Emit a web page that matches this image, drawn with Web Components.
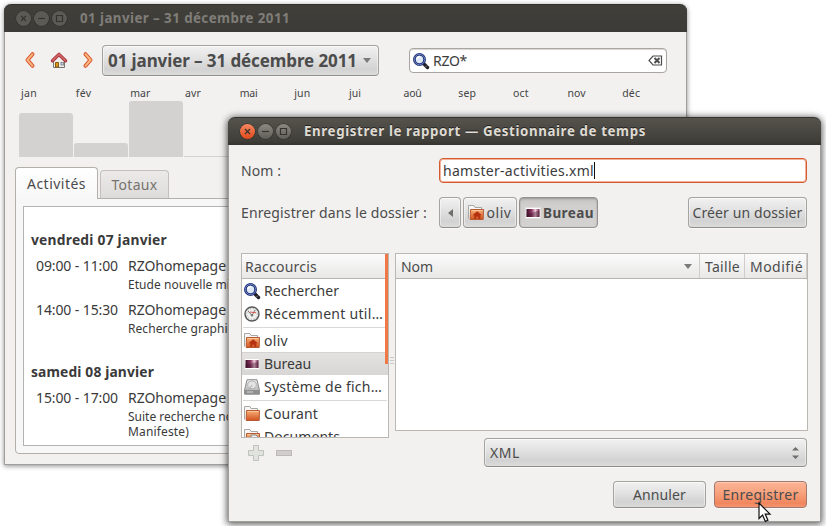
<!DOCTYPE html>
<html lang="fr">
<head>
<meta charset="utf-8">
<title>Gestionnaire de temps</title>
<style>
html,body{margin:0;width:826px;height:526px;overflow:hidden;background:#fff;
 font-family:"Noto Sans","Open Sans",sans-serif;font-size:14px;color:#4c4c4c}
time-desktop{display:block}
</style>
</head>
<body>
<time-desktop></time-desktop>
<script>
const define = (name, html, setup) => customElements.define(name, class extends HTMLElement {
  connectedCallback() {
    if (this.shadowRoot) return;
    const root = this.attachShadow({mode: 'open'});
    const t = document.createElement('template');
    t.innerHTML = typeof html === 'function' ? html(this) : html;
    root.append(t.content.cloneNode(true));
    if (setup) setup(this, root);
  }
});

const folder = inner => `<path d="M.5 13.500V.5h5.500l1 2h6.500v4" fill="#f7f6f5" stroke="#a9a7a4"/><path d="M2.500 4.500h13l-.3 10H2.200z" fill="url(#of)" stroke="#b65a32"/><path d="M3.500 5.500h11" stroke="#f9c39c"/>${inner}`;
const ofGrad = `<defs><linearGradient id="of" x1="0" y1="0" x2="0" y2="1"><stop offset="0" stop-color="#f8b078"/><stop offset="1" stop-color="#d2521f"/></linearGradient>
<linearGradient id="dk" x1="0" y1="0" x2="1" y2="0"><stop offset="0" stop-color="#3d0f26"/><stop offset=".4" stop-color="#8c3a64"/><stop offset=".68" stop-color="#f3cfe0"/><stop offset="1" stop-color="#6a2448"/></linearGradient>
<linearGradient id="gr" x1="0" y1="0" x2="0" y2="1"><stop offset="0" stop-color="#eee"/><stop offset="1" stop-color="#a5a5a5"/></linearGradient></defs>`;
const ICONS = {
  left: [10,16,`<path d="M7.500 2.200L2.500 8l5 5.800" fill="none" stroke="#d8532a" stroke-width="4" stroke-linecap="round" stroke-linejoin="round"/><path d="M7.500 2.200L2.500 8l5 5.800" fill="none" stroke="#f9b680" stroke-width="2" stroke-linecap="round"/>`],
  right: [10,16,`<path d="M2.500 2.200l5 5.800-5 5.800" fill="none" stroke="#d8532a" stroke-width="4" stroke-linecap="round" stroke-linejoin="round"/><path d="M2.500 2.200l5 5.800-5 5.800" fill="none" stroke="#f9b680" stroke-width="2" stroke-linecap="round"/>`],
  home: [16,16,`<path d="M2.500 8.500L8 3.500l5.500 5v7h-11z" fill="#efeeec" stroke="#77746f"/><path d="M4.500 15v-4.500h3V15z" fill="#d99a1c" stroke="#8a5a0c"/><rect x="10" y="10.500" width="2.500" height="2.500" fill="#c9d8e8" stroke="#777" stroke-width=".8"/><path d="M1.500 8.800L8 2.400l6.500 6.400" fill="none" stroke="#a3333a" stroke-width="3.400" stroke-linecap="round" stroke-linejoin="round"/><path d="M1.700 8.500L8 2.300l6.300 6.200" fill="none" stroke="#cf5f63" stroke-width="1.800" stroke-linecap="round"/>`],
  search: [16,16,`<path d="M10.500 10.500l4 4" stroke="#1f1f27" stroke-width="3.400" stroke-linecap="round"/><path d="M12.500 14l1.500-1.500" stroke="#8c8c90" stroke-width="1"/><circle cx="6.500" cy="6.500" r="5.100" fill="#dde8f4" stroke="#26357a" stroke-width="2.800"/><circle cx="6.500" cy="6.500" r="5.200" fill="none" stroke="#6c86c4" stroke-width=".9"/><path d="M4 6a3 3 0 013-2.500" fill="none" stroke="#fff" stroke-width="1.400"/>`],
  clear: [15,11,`<path d="M5 1h8.500v9H5L1 5.500z" fill="#fff" stroke="#4d4d4d" stroke-width="1.200"/><path d="M6.500 3l5 5m0-5l-5 5" stroke="#4d4d4d" stroke-width="2"/>`],
  clock: [16,16,`<circle cx="8" cy="8" r="7" fill="#f0f0ef" stroke="#555" stroke-width="1.400"/><circle cx="8" cy="8" r="5.300" fill="none" stroke="#999" stroke-dasharray="1 1.800"/><path d="M4 5l4 4.500L11 4" fill="none" stroke="#666" stroke-width=".9"/><path d="M6 6l6 .8" stroke="#d5443c" stroke-width=".9"/><circle cx="8" cy="9.300" r="1.200" fill="#777"/>`],
  userhome: [16,16,folder(`<path d="M4.500 10.300l4.700-4 4.700 4h-1.500V14h-2v-2.300H8.200V14h-2v-3.700z" fill="#b5310f"/>`)],
  folder: [16,16,folder('')],
  docs: [16,16,folder(`<path d="M7 6h5l2 2v7H7z" fill="#eee" stroke="#888"/><path d="M9 10h3M9 12h3" stroke="#777"/>`)],
  desktop: [16,16,`<rect x=".5" y="2.500" width="15" height="11" fill="#fff" stroke="#e2dfdd"/><rect x="1.500" y="4" width="13" height="8" fill="url(#dk)"/><path d="M1.500 8.500q6-.5 13-3V12h-13z" fill="#3d0f26" opacity=".4"/>`],
  disk: [16,16,`<path d="M3 .7h10l2.400 10.300v4.200H.6V11z" fill="url(#gr)" stroke="#8a8a8a"/><ellipse cx="8" cy="5.800" rx="4.300" ry="3.800" fill="#e4e4e4" stroke="#b5b5b5"/><path d="M8 6l-3 4" stroke="#aaa"/><path d="M1 11h14v4H1z" fill="#8f8f8f"/><path d="M3 13h6" stroke="#d5d5d5"/>`],
  plus: [16,16,`<path d="M5.500.5h5v5h5v5h-5v5h-5v-5h-5v-5h5z" fill="#e1e3df" stroke="#c0c3bd"/>`],
  minus: [16,6,`<rect x=".5" y=".5" width="15" height="5" fill="#d0cdcd" stroke="#bdb9b9"/>`],
  down: [8,5,`<path d="M0 0h8L4 5z" fill="#7c7b79"/>`],
  back: [5,8,`<path d="M5 0v8L0 4z" fill="#6f6e6c"/>`],
  updown: [7,12,`<path d="M0 3.500h7L3.500 0zM0 8.500h7L3.500 12z" fill="#6f6e6c"/>`],
  grip: [4,8,`<path d="M0 .5h4M0 3.500h4M0 6.500h4" stroke="#c9c7c5"/>`],
  pointer: [13,21,`<path d="M1 1v15.500l3.600-3.400 2.700 6.300 2.600-1.100-2.700-6.200H12z" fill="#fff" stroke="#111" stroke-width="1.200"/>`]
};
define('ui-icon', el => {
  const [w,h,body] = ICONS[el.getAttribute('name')];
  return `<style>:host{display:block;flex:none;width:${w}px;height:${h}px}svg{display:block;overflow:visible}</style><svg width="${w}" height="${h}" viewBox="0 0 ${w} ${h}">${ofGrad}${body}</svg>`;
});

define('gtk-button', `<style>
:host{display:flex;box-sizing:border-box;height:31px;align-items:center;justify-content:center;gap:5px;flex:none;
 border:1px solid #a5a3a0;border-bottom-color:#8f8d8a;border-radius:4px;background:linear-gradient(#f1f1f1,#e3e3e3 40%,#d2d2d2 80%,#dcdcdc);
 box-shadow:inset 0 1px #fafafa,inset 1px 0 #ffffff70,inset -1px 0 #ffffff70,0 1px #ffffff90}
:host([pressed]){background:linear-gradient(#c4c3c2,#d0cfce 25%,#d3d2d1);border-color:#949290;box-shadow:inset 0 1px 2px #9a9896,0 1px #ffffff90}
:host([primary]){background:linear-gradient(#fbb495,#f8a481 40%,#f0865d 85%,#f29673);border-color:#a3786a;box-shadow:inset 0 1px #fdc9b2,0 1px #ffffff90}
</style><slot></slot>`);

define('gtk-entry', `<style>
:host{display:flex;box-sizing:border-box;height:25px;align-items:center;background:#fff;border:1px solid #a9a5a0;border-radius:4px;color:#3c3c3c;padding:0 3px;
 box-shadow:inset 0 1px 1px #d9d7d4}
:host([focused]){border-color:#d3592f;box-shadow:inset 0 0 0 1px #f2b29b}
</style><slot></slot>`);

define('os-window', `<style>
:host{display:flex;flex-direction:column;position:absolute;box-sizing:border-box;background:#f2f1f0;border:1px solid #a09e9b;border-top:0;border-radius:7px 7px 0 0;box-shadow:0 1px 5px #0007}
:host([active]){box-shadow:0 1px 7px 1px #000a}
header{height:28px;box-sizing:border-box;margin:0 -1px;flex:none;display:flex;align-items:center;padding-left:12px;gap:3px;border-radius:7px 7px 0 0;
 background:linear-gradient(#403f3a,#3c3b37);border-top:1px solid #34332f;color:#807d78;font-weight:700;font-size:13.300px}
:host([active]) header{background:linear-gradient(#55534c,#3f3e39 85%,#34332e);color:#dfdbd2;text-shadow:0 -1px #222}
i{width:15px;height:15px;flex:none;border-radius:50%;background:#5c5a55;display:flex;box-shadow:0 0 0 .5px #2f2e2b}
:host([active]) i{background:linear-gradient(#8b8982,#605e58)}
:host([active]) i:first-child{background:linear-gradient(#f6875f,#e0491b)}
svg{width:15px;height:15px;stroke:#34332f;fill:none;stroke-width:1.200}
span{margin:0 0 2px 10px}
main{flex:1;min-height:0;display:flex;flex-direction:column}
</style><header><i><svg><path d="M5 5l5 5m0-5l-5 5"/></svg></i><i><svg><path d="M4 7.500h7"/></svg></i><i><svg><path d="M4.500 4.500h6v6h-6z"/></svg></i><span><slot name="title"></slot></span></header><main><slot></slot></main>`);

define('month-chart', () => {
  const m = [['jan',16,44],['fév',16,14],['mar',20,56],['avr',16,1],['mai',18,1],['jun',16,1],['jui',12,1],['aoû',18,1],['sep',18,1],['oct',16,1],['nov',18,1],['déc',18,1]];
  return `<style>:host{display:block;margin:10px 0 0 14px;font-size:10.500px;color:#444}
  .l{display:grid;grid-template-columns:repeat(12,54.670px);height:15px;margin-bottom:-1px}
  fit-text{line-height:15px;padding-left:2px}
  .g{display:flex;align-items:flex-end;gap:1px;height:57px}
  .b{width:54px;background:#d3d2d1;border-radius:3px 3px 0 0}</style><div class="l">` +
  m.map(a => `<fit-text w="${a[1]}">${a[0]}</fit-text>`).join('') + '</div><div class="g">' + m.map(a => `<div class="b" style="height:${a[2]}px${a[2]<2?';border-radius:0':''}"></div>`).join('') + '</div>';
});

define('report-entry', el => `<style>
:host{display:grid;grid-template-columns:92px 1fr;padding-left:5px;line-height:18px}
.n{font-size:12px;line-height:15px;grid-column:2;display:flex;flex-direction:column;margin-top:2px}
</style><fit-text w="82">${el.getAttribute('time')}</fit-text><fit-text w="98">RZOhomepage</fit-text><div class="n"><slot></slot></div>`);

define('tab-view', `<style>
:host{display:block;margin:10px 10px 0}
nav{display:flex;align-items:flex-end;gap:2px;height:31px}
nav div{box-sizing:border-box;display:flex;align-items:center;justify-content:center;border:1px solid #c3c0bc;border-bottom:0;border-radius:4px 4px 0 0}
.on{width:83px;height:32px;margin-bottom:-1px;background:linear-gradient(#fff,#f7f7f7);border-color:#b3afa9!important;position:relative}
.off{width:69px;height:28px;background:linear-gradient(#ebeae9,#dddcdb);color:#77736d}
.page{height:256px;box-sizing:border-box;border:1px solid #b3afa9;border-radius:0 4px 4px 4px;background:#f7f7f7;padding:7px}
.view{height:240px;box-sizing:border-box;border:1px solid #b5b3b0;background:#fff;padding:24px 0 0 7px;color:#3a3a3a;overflow:hidden;white-space:nowrap}
h3{margin:0 0 8px;font-size:13.800px;line-height:18px;font-weight:700;height:18px}
</style><nav><div class="on"><fit-text w="59">Activités</fit-text></div><div class="off"><fit-text w="46">Totaux</fit-text></div></nav>
<div class="page"><div class="view">
<h3><fit-text w="136">vendredi 07 janvier</fit-text></h3>
<report-entry time="09:00 - 11:00" style="margin-bottom:9px"><fit-text w="102">Etude nouvelle mi</fit-text></report-entry>
<report-entry time="14:00 - 15:30" style="margin-bottom:27px"><fit-text w="107">Recherche graphiq</fit-text></report-entry>
<h3><fit-text w="123">samedi 08 janvier</fit-text></h3>
<report-entry time="15:00 - 17:00"><fit-text w="105">Suite recherche no</fit-text><fit-text w="61">Manifeste)</fit-text></report-entry>
</div></div>`);

define('place-item', el => `<style>
:host{display:flex;height:23px;align-items:center;gap:4px;padding-left:2px;box-sizing:border-box;color:#3a3a3a;white-space:nowrap}
:host([selected]){background:linear-gradient(#e5e3e1,#d8d6d4);box-shadow:inset 0 1px #d5d3d0}
</style><ui-icon name="${el.getAttribute('icon')}"></ui-icon><slot></slot>`);

define('place-list', `<style>
:host{display:block;box-sizing:border-box;width:148px;height:185px;border:1px solid #bbb8b4;background:#fff;overflow:hidden;position:relative}
.h{height:25px;box-sizing:border-box;border-bottom:1px solid #b8b5b1;background:linear-gradient(#fbfbfb,#e9e8e7);display:flex;align-items:center;padding-left:3px}
hr{border:0;height:1px;background:#dad8d5;margin:2px 1px 1px}
.bar{position:absolute;right:0;top:0;width:3px;height:110px;background:#f07746}
</style><div class="h"><fit-text w="72">Raccourcis</fit-text></div>
<place-item icon="search"><fit-text w="75">Rechercher</fit-text></place-item>
<place-item icon="clock"><fit-text w="119">Récemment util…</fit-text></place-item><hr>
<place-item icon="userhome"><fit-text w="24">oliv</fit-text></place-item>
<place-item icon="desktop" selected><fit-text w="47">Bureau</fit-text></place-item>
<place-item icon="disk"><fit-text w="118">Système de fich…</fit-text></place-item><hr>
<place-item icon="folder"><fit-text w="54">Courant</fit-text></place-item>
<place-item icon="docs"><fit-text w="76">Documents</fit-text></place-item><div class="bar"></div>`);

define('file-table', `<style>
:host{display:block;flex:none;box-sizing:border-box;width:413px;height:178px;border:1px solid #bbb8b4;background:#fff}
.h{height:25px;box-sizing:border-box;border-bottom:1px solid #b8b5b1;background:linear-gradient(#fbfbfb,#e9e8e7);display:grid;grid-template-columns:304px 45px 1fr}
.h div{display:flex;align-items:center;justify-content:space-between;padding:0 7px 0 5px;border-right:1px solid #cfccc9}
.h div:last-child{padding-right:0}
</style><div class="h"><div><fit-text w="32">Nom</fit-text><ui-icon name="down"></ui-icon></div><div><fit-text w="35">Taille</fit-text></div><div><fit-text w="53">Modifié</fit-text></div></div>`);

define('report-window', `<style>
:host{display:block}
.bar{display:flex;align-items:center;height:31px;margin-top:13px;padding-left:20px}
.bar>ui-icon{margin-bottom:2px}
</style><div class="bar"><ui-icon name="left"></ui-icon><ui-icon name="home" style="margin:0 16px 2px"></ui-icon><ui-icon name="right"></ui-icon>
<gtk-button style="width:277px;margin-left:9px;font-size:17px;font-weight:700;gap:6px;padding-right:2px"><fit-text w="249">01 janvier – 31 décembre 2011</fit-text><ui-icon name="down"></ui-icon></gtk-button>
<gtk-entry style="width:258px;margin-left:30px;gap:4px"><ui-icon name="search"></ui-icon><fit-text w="34">RZO*</fit-text><ui-icon name="clear" style="margin-left:auto"></ui-icon></gtk-entry></div>
<month-chart></month-chart><tab-view></tab-view>`);

define('save-dialog', `<style>
:host{display:block;padding:13px 13px 0 12px}
.r{display:flex;align-items:center}
.caret{width:1px;height:17px;background:#111}
.lists{display:flex;align-items:flex-start;margin:25px -1px 0 0;height:178px}
.lists ui-icon{margin:104px 1px 0}
</style>
<div class="r"><fit-text w="40">Nom :</fit-text><gtk-entry focused style="width:368px;margin-left:auto"><fit-text w="151">hamster-activities.xml</fit-text><div class="caret"></div></gtk-entry></div>
<div class="r" style="margin-top:14px;gap:2px"><fit-text w="186" style="width:196px">Enregistrer dans le dossier :</fit-text>
<gtk-button style="width:22px"><ui-icon name="back"></ui-icon></gtk-button>
<gtk-button style="width:54px;gap:3px;padding-right:1px"><ui-icon name="userhome"></ui-icon><fit-text w="25">oliv</fit-text></gtk-button>
<gtk-button pressed style="width:79px;gap:2px;font-weight:700;font-size:13.500px;padding:1px 0 0 2px"><ui-icon name="desktop"></ui-icon><fit-text w="51">Bureau</fit-text></gtk-button>
<gtk-button style="width:119px;margin-left:auto"><fit-text w="110">Créer un dossier</fit-text></gtk-button></div>
<div class="lists"><place-list></place-list><ui-icon name="grip"></ui-icon><file-table></file-table></div>
<div class="r" style="margin-top:7px;align-items:flex-start;padding-left:7px;gap:12px"><ui-icon name="plus" style="margin-top:7px"></ui-icon><ui-icon name="minus" style="margin-top:12px"></ui-icon>
<gtk-button style="width:323px;height:29px;margin-left:auto;justify-content:space-between;padding:0 7px 0 5px"><fit-text w="30">XML</fit-text><ui-icon name="updown"></ui-icon></gtk-button></div>
<div class="r" style="margin-top:14px;justify-content:flex-end;gap:8px"><gtk-button style="width:93px;height:27px"><fit-text w="53">Annuler</fit-text></gtk-button><gtk-button primary style="width:93px;height:27px"><fit-text w="76">Enregistrer</fit-text></gtk-button></div>`);

define('time-desktop', `<style>
:host{position:relative;width:826px;height:526px;overflow:hidden}
.a{left:4px;top:4px;width:683px;height:461px}.b{left:228px;top:117px;width:593px;height:405px}
.p{position:absolute;left:758px;top:502px}
</style>
<os-window class="a"><fit-text slot="title" w="210">01 janvier – 31 décembre 2011</fit-text><report-window></report-window></os-window>
<os-window class="b" active><fit-text slot="title" w="342">Enregistrer le rapport — Gestionnaire de temps</fit-text><save-dialog></save-dialog></os-window>
<ui-icon class="p" name="pointer"></ui-icon>`);

/* Spreads its text over the width given by the "w" attribute through letter-spacing. */
define('fit-text', `<style>:host{display:block;flex:none;white-space:nowrap}span{display:inline-block;white-space:nowrap}</style><span><slot></slot></span>`, (el, root) => {
  const s = root.querySelector('span');
  const spare = +el.getAttribute('w') - s.getBoundingClientRect().width;
  s.style.letterSpacing = spare / el.textContent.length + 'px';
});
</script>
</body>
</html>
